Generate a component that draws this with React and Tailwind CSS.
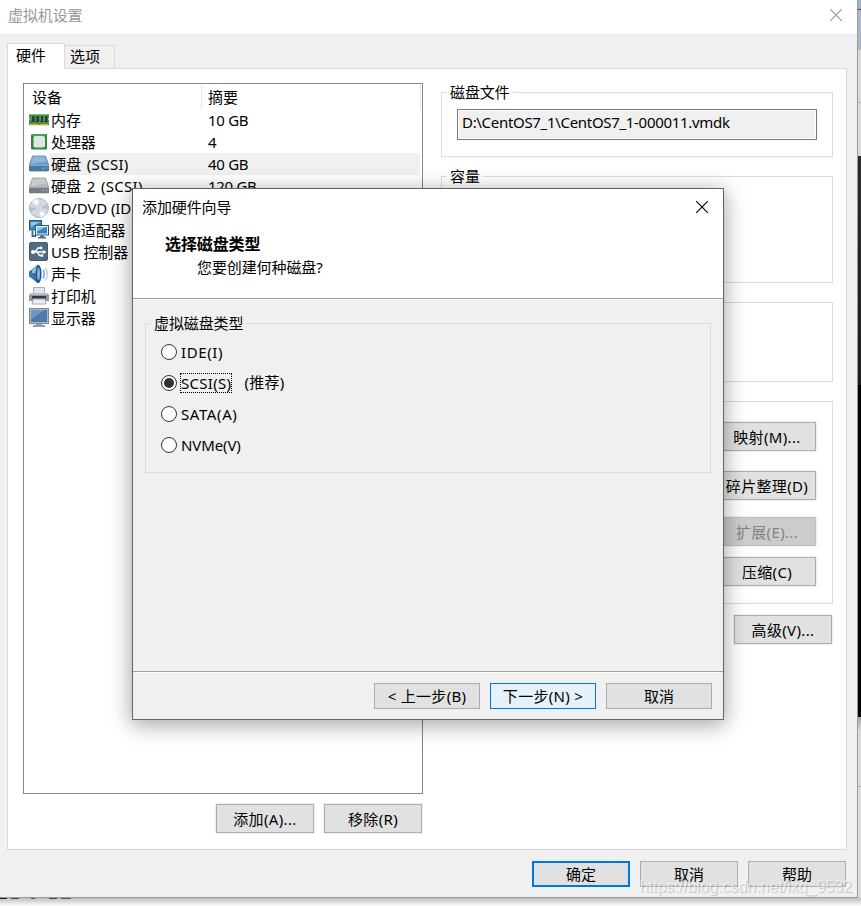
import { useState } from 'react';

const DEVICES = [
  { id: 'memory', name: '内存', summary: '10 GB', icon: MemoryIcon },
  { id: 'cpu', name: '处理器', summary: '4', icon: CpuIcon },
  { id: 'disk1', name: '硬盘 (SCSI)', summary: '40 GB', icon: BlueDiskIcon, wide: true },
  { id: 'disk2', name: '硬盘 2 (SCSI)', summary: '120 GB', icon: GrayDiskIcon, wide: true },
  { id: 'cd', name: 'CD/DVD (IDE)', icon: CdIcon },
  { id: 'net', name: '网络适配器', icon: NetworkIcon },
  { id: 'usb', name: 'USB 控制器', icon: UsbIcon },
  { id: 'sound', name: '声卡', icon: SoundIcon },
  { id: 'printer', name: '打印机', icon: PrinterIcon },
  { id: 'display', name: '显示器', icon: DisplayIcon },
];

const DISK_TYPES = [
  { id: 'ide', label: 'IDE(I)', tracking: 'tracking-[0.6px]' },
  { id: 'scsi', label: 'SCSI(S)', note: '(推荐)', tracking: 'tracking-[0.3px]' },
  { id: 'sata', label: 'SATA(A)', tracking: 'tracking-[0.6px]' },
  { id: 'nvme', label: 'NVMe(V)', tracking: 'tracking-[-0.1px]' },
];

function MemoryIcon() {
  return (
    <svg width="20" height="20" viewBox="0 0 20 20">
      <path d="M0 4h20v4l-1 1 1 1v5H0v-5l1-1-1-1z" fill="#3f9a44" />
      <path d="M0 4h20v1H0z" fill="#74c276" />
      <path d="M2 6h3.500v6H2zM6.500 6H10v6H6.500zM11 6h3v6h-3zM15 6h3.500v6H15z" fill="#2f3a33" />
      <path d="M2 6h1v5H2zM6.500 6h1v5h-1zM11 6h1v5h-1zM15 6h1v5h-1z" fill="#7b857e" />
      <path d="M1 14h8v1.500H1zM11 14h8v1.500h-8z" fill="#e8b04c" />
    </svg>
  );
}

function CpuIcon() {
  return (
    <svg width="20" height="20" viewBox="0 0 20 20">
      <path d="M3 2h15v15.500H4L2 17V3z" fill="#2c8b40" />
      <path d="M3 2.500h14v1H3z" fill="#63b673" />
      <rect x="5" y="4.500" width="10.500" height="10.500" rx="1" fill="#e2e4e2" stroke="#d5f2d8" />
    </svg>
  );
}

function DiskShape({ top, front, edge }) {
  return (
    <svg width="20" height="20" viewBox="0 0 20 20">
      <path d="M3.500 2h13l3 8.500V17H.5v-6.500z" fill={top} stroke={edge} strokeWidth=".8" />
      <path d="M4 2.500h12l1.500 5q-8 0-15.500 3z" fill="#fff" opacity=".25" />
      <path d="M0 11h20v6H0z" fill={front} />
      <path d="M0 11h20v1H0z" fill="#fff" opacity=".35" />
      <rect x="13.500" y="13.500" width="1.500" height="1.500" fill="#8fdc64" />
      <rect x="17" y="13.500" width="1" height="1" fill="#ddd" />
    </svg>
  );
}

function BlueDiskIcon() {
  return <DiskShape top="#6c9fcd" front="#4a78a5" edge="#5484b2" />;
}

function GrayDiskIcon() {
  return <DiskShape top="#b4bac1" front="#757c84" edge="#969da5" />;
}

function CdIcon() {
  return (
    <svg width="20" height="20" viewBox="0 0 20 20">
      <circle cx="10" cy="10" r="9.500" fill="#d3dae0" stroke="#aab3bb" />
      <path d="M10 10L3 3.500A9 9 0 0 1 9 1zM10 10l7 6.500a9 9 0 0 1-6 2.500z" fill="#f7f9fb" />
      <path d="M10 10l8.500-4a9 9 0 0 1 .5 5zM10 10L1.500 14A9 9 0 0 1 1 9z" fill="#b9c4ce" />
      <circle cx="10" cy="10" r="3.500" fill="#eef1f4" stroke="#a9b3bb" strokeWidth=".7" />
      <circle cx="10" cy="10" r="1.400" fill="#fff" stroke="#8e99a3" strokeWidth=".7" />
    </svg>
  );
}

function NetworkIcon() {
  return (
    <svg width="20" height="20" viewBox="0 0 20 20">
      <rect x=".5" y=".5" width="12" height="9.500" fill="#3a8ac6" stroke="#39556f" />
      <path d="M2 2h9L2 7z" fill="#8bc7ef" />
      <path d="M3.500 10.500v5.500H7" fill="none" stroke="#2f6ea3" strokeWidth="1.800" />
      <rect x="6.500" y="5.500" width="13" height="9.500" fill="#e8f2fa" stroke="#39556f" />
      <rect x="8" y="7" width="10" height="6.500" fill="#2f87c9" />
      <path d="M8 7h9l-9 4.500z" fill="#8bc7ef" />
      <path d="M11 15.500h4V17h2v1.500H9V17h2z" fill="#52697e" />
    </svg>
  );
}

function UsbIcon() {
  return (
    <svg width="20" height="20" viewBox="0 0 20 20">
      <rect x=".5" y=".5" width="18" height="18" rx="1.500" fill="#526a82" stroke="#465c72" />
      <path d="M3 10h12M6 10l3-4h3M8 10l2.500 3.500H13" fill="none" stroke="#fff" strokeWidth="1.300" />
      <circle cx="4" cy="10" r="2" fill="#fff" />
      <path d="M14 7.800l3.500 2.200-3.500 2.200z" fill="#fff" />
      <circle cx="12" cy="6" r="1.400" fill="#fff" />
      <path d="M11.800 12.300h2.400v2.400h-2.400z" fill="#fff" />
    </svg>
  );
}

function SoundIcon() {
  return (
    <svg width="20" height="20" viewBox="0 0 20 20">
      <path d="M.5 7.500L3 6l6-5v18l-6-5-2.500-1.500z" fill="#3977ac" stroke="#2b5a85" strokeWidth=".8" />
      <path d="M3 6.500L8 2v7H3z" fill="#93c1e6" />
      <ellipse cx="9.500" cy="10" rx="3" ry="9" fill="#244e77" />
      <ellipse cx="9.500" cy="10" rx="1.600" ry="6.500" fill="#7fb2db" />
      <path d="M14 5.500q2.500 4.500 0 9" fill="none" stroke="#69a7dc" strokeWidth="1.500" />
      <path d="M16.500 3.500q3.500 6.500 0 13" fill="none" stroke="#a6cdec" strokeWidth="1.300" />
    </svg>
  );
}

function PrinterIcon() {
  return (
    <svg width="20" height="20" viewBox="0 0 20 20">
      <path d="M4.500 1.500h11v7h-11z" fill="#e4e6ea" stroke="#a8adb4" />
      <path d="M2 7h16l2 2v6H0V9z" fill="#9097a6" />
      <path d="M2 7h16l1 2H1z" fill="#b9bec8" />
      <path d="M3 10h14v2.500H3z" fill="#343a45" />
      <path d="M4 13h12l1 5H3z" fill="#eceef1" stroke="#9298a3" strokeWidth=".8" />
    </svg>
  );
}

function DisplayIcon() {
  return (
    <svg width="20" height="20" viewBox="0 0 20 20">
      <rect x=".5" y=".5" width="19" height="15" fill="#aab7c3" stroke="#7b8a98" />
      <rect x="2" y="2" width="16" height="12" fill="#4d7aa8" />
      <path d="M2 2h14L2 11z" fill="#6f99c2" />
      <path d="M7 16h6v1h3v2H4v-2h3z" fill="#909ba6" />
    </svg>
  );
}

function CloseIcon() {
  return (
    <svg width="12" height="12" viewBox="0 0 12 12">
      <path d="M0 0l12 12M12 0L0 12" fill="none" stroke="currentColor" strokeWidth="1.100" />
    </svg>
  );
}

function PanelButton({ children, disabled }) {
  return (
    <button
      disabled={disabled}
      className={`block h-[29px] w-[98px] shrink-0 border text-center leading-[26px] tracking-[0.35px] whitespace-nowrap outline outline-[#f0f0f0]
        ${disabled ? 'border-[#bfbfbf] bg-[#cccccc] text-[#838383]' : 'border-[#adadad] bg-[#e1e1e1]'}`}
    >
      {children}
    </button>
  );
}

function GroupBox({ title, className, children }) {
  return (
    <fieldset className={`min-w-0 border border-[#dcdcdc] ${className}`}>
      {title && <legend className="ml-[5px] h-5 px-[3px] leading-5">{title}</legend>}
      {children}
    </fieldset>
  );
}

function DeviceList() {
  const [selected, setSelected] = useState('disk1');

  return (
    <div className="h-[711px] w-[400px] border border-[#828790] bg-white">
      <div className="flex h-[25px] leading-[25px]">
        <div className="mt-px w-[178px] border-r border-[#e5e5e5] pl-2">设备</div>
        <div className="mt-px w-[219px] border-r border-[#e5e5e5] pl-1.5">摘要</div>
      </div>
      {DEVICES.map(({ id, name, summary, icon: Icon, wide }) => (
        <div key={id} onClick={() => setSelected(id)} className="flex h-[22px] items-center pr-0.5 pl-[5px] leading-[22px]">
          <Icon />
          <div className={`flex h-[22px] flex-1 whitespace-nowrap ${id === selected ? 'bg-[#f0f0f0]' : ''}`}>
            <span className={`w-[157px] pl-0.5 ${wide ? 'tracking-[0.3px] [word-spacing:1px]' : ''}`}>{name}</span>
            {summary && <span className="pl-0.5 tracking-[-0.3px]">{summary}</span>}
          </div>
        </div>
      ))}
    </div>
  );
}

function DiskSettings() {
  return (
    <div className="flex w-[392px] flex-col">
      <GroupBox title="磁盘文件" className="h-[75px]">
        <div className="mt-[7px] ml-[15px] h-[31px] w-[360px] border border-[#7a7a7a] bg-[#f0f0f0] pl-1 leading-[25px] tracking-[-0.31px] shadow-[inset_0_0_0_1px_white]">
          D:\CentOS7_1\CentOS7_1-000011.vmdk
        </div>
      </GroupBox>
      <GroupBox title="容量" className="mt-[9px] h-[117px]" />
      <GroupBox className="mt-[19px] h-20" />
      <GroupBox className="mt-[19px] flex h-[203px] flex-col items-end pr-4">
        <div className="mt-5"><PanelButton>映射(M)...</PanelButton></div>
        <div className="mt-5"><PanelButton>碎片整理(D)</PanelButton></div>
        <div className="mt-[17px]"><PanelButton disabled>扩展(E)...</PanelButton></div>
        <div className="mt-[11px]"><PanelButton>压缩(C)</PanelButton></div>
      </GroupBox>
      <div className="mt-[11px] mr-px self-end"><PanelButton>高级(V)...</PanelButton></div>
    </div>
  );
}

function WizardDialog() {
  const [type, setType] = useState('scsi');

  return (
    <div className="absolute top-[188px] left-[132px] flex h-[532px] w-[592px] flex-col border border-[#646464] bg-[#f0f0f0] shadow-[0_4px_20px_1px_rgba(0,0,0,0.36)]">
      <div className="h-[110px] shrink-0 border-b border-[#a0a0a0] bg-white">
        <div className="flex h-9 items-center justify-between pr-[15px] pl-[9px]">
          <span>添加硬件向导</span>
          <CloseIcon />
        </div>
        <h2 className="mt-[7px] ml-8 text-[16px] leading-6 font-bold">选择磁盘类型</h2>
        <p className="ml-16 leading-[22px]">您要创建何种磁盘?</p>
      </div>
      <div className="flex-1 border-t border-white pt-[13px] pl-3">
        <GroupBox title="虚拟磁盘类型" className="h-[160px] w-[566px]">
          <div className="mt-[3px] ml-[15px]">
            {DISK_TYPES.map(({ id, label, note, tracking }) => (
              <label key={id} className="flex h-[31px] items-center">
                <input type="radio" name="disk-type" checked={type === id} onChange={() => setType(id)} className="sr-only" />
                <span className="flex size-4 items-center justify-center rounded-full border border-[#333] bg-white">
                  {type === id && <span className="size-2.5 rounded-full bg-[#333]" />}
                </span>
                <span className={`ml-[3px] h-5 border border-dotted leading-[18px] ${tracking} ${type === id ? 'border-black' : 'border-transparent'}`}>{label}</span>
                {note && <span className="ml-3 tracking-[0.3px]">{note}</span>}
              </label>
            ))}
          </div>
        </GroupBox>
      </div>
      <div className="h-12 shrink-0 border-t border-[#a0a0a0]">
        <div className="flex h-[47px] justify-end gap-2.5 border-t border-white pt-2.5 pr-2.5 tracking-[0.3px] [word-spacing:1px]">
          <button className="h-[26px] w-[106px] border border-[#adadad] bg-[#e1e1e1] leading-[23px]">&lt; 上一步(B)</button>
          <button className="h-[26px] w-[106px] border border-[#0078d7] bg-[#e5f1fb] leading-[23px]">下一步(N) &gt;</button>
          <button className="mr-px h-[26px] w-[106px] border border-[#adadad] bg-[#e1e1e1] leading-[23px] tracking-normal">取消</button>
        </div>
      </div>
    </div>
  );
}

// Slice of the desktop that shows to the right of the window
function DesktopEdge() {
  return (
    <div className="flex w-[3px] flex-col">
      <div className="h-[9px] bg-[#9db4d0]" />
      <div className="h-px bg-[#4b4b4b]" />
      <div className="h-10 bg-[#b0b4cd]" />
      <div className="h-[52px] bg-[#dadada]" />
      <div className="h-px bg-[#a9bbd0]" />
      <div className="h-[53px] bg-[#dadada]" />
      <div className="h-[229px] bg-gradient-to-b from-[#2b2b2b] to-[#1c1c1c]" />
      <div className="h-[332px] bg-black" />
      <div className="h-[69px] bg-gradient-to-b from-[#a5a5a5] via-[#dadada] via-20% to-[#dadada]" />
      <div className="h-px bg-[#b4b4b4]" />
      <div className="flex-1 bg-[#dedede]" />
    </div>
  );
}

export default function App() {
  return (
    <div className="relative h-[906px] w-[861px] overflow-hidden bg-white font-['Noto_Sans','Noto_Sans_CJK_SC',sans-serif] text-[15px] tracking-[-0.1px] text-black">
      <div className="flex h-[898px]">
        <div className="flex w-[858px] flex-col border-r border-b border-[#9a9a9a] bg-[#f0f0f0]">
          <header className="flex h-[34px] shrink-0 items-center justify-between bg-white pr-[15px] pb-1 pl-2 text-[#999]">
            <span>虚拟机设置</span>
            <CloseIcon />
          </header>

          <div className="flex h-[34px] shrink-0 items-end pl-[7px]">
            <div className="z-10 -mb-px h-[26px] w-[58px] border border-b-0 border-[#dadada] bg-white pl-2 leading-[22px]">硬件</div>
            <div className="h-[23px] w-[50px] border border-b-0 border-l-0 border-[#dadada] bg-[#f0f0f0] pl-[5px] leading-[21px]">选项</div>
          </div>

          <main className="ml-[7px] flex h-[782px] w-[840px] shrink-0 justify-between border border-[#dadada] bg-white pr-[13px] pl-[15px]">
            <div className="pt-3.5">
              <DeviceList />
              <div className="mt-2.5 mr-px flex justify-end gap-2.5">
                <PanelButton>添加(A)...</PanelButton>
                <PanelButton>移除(R)</PanelButton>
              </div>
            </div>
            <div className="pt-[13px]">
              <DiskSettings />
            </div>
          </main>

          <footer className="mt-[11px] flex justify-end gap-2.5 pr-[11px]">
            <button className="h-[26px] w-[98px] border-2 border-[#0078d7] bg-[#e1e1e1] leading-[21px]">确定</button>
            <button className="h-[26px] w-[98px] border border-[#adadad] bg-[#e1e1e1] leading-[23px]">取消</button>
            <button className="h-[26px] w-[98px] border border-[#adadad] bg-[#e1e1e1] leading-[23px]">帮助</button>
          </footer>
        </div>
        <DesktopEdge />
      </div>
      {/* Window shadow, with tips of the desktop's glyphs showing under the frame */}
      <div className="flex h-2 items-start gap-1 bg-gradient-to-b from-[#bdbdbd] to-white">
        <div className="h-px w-[7px] bg-[#223]" />
        <div className="h-px w-2 bg-[#445]" />
        <div className="ml-2 h-px w-1 bg-[#556]" />
        <div className="ml-2.5 h-px w-2 bg-[#445]" />
        <div className="h-px w-2.5 bg-[#556]" />
      </div>

      <WizardDialog />

      <div className="absolute right-[9px] bottom-[7px] font-['Liberation_Sans',sans-serif] text-[16px] leading-6 tracking-normal text-white/60 [text-shadow:1px_1px_1px_rgba(0,0,0,0.2)]">
        https://blog.csdn.net/lxq_9532
      </div>
    </div>
  );
}
